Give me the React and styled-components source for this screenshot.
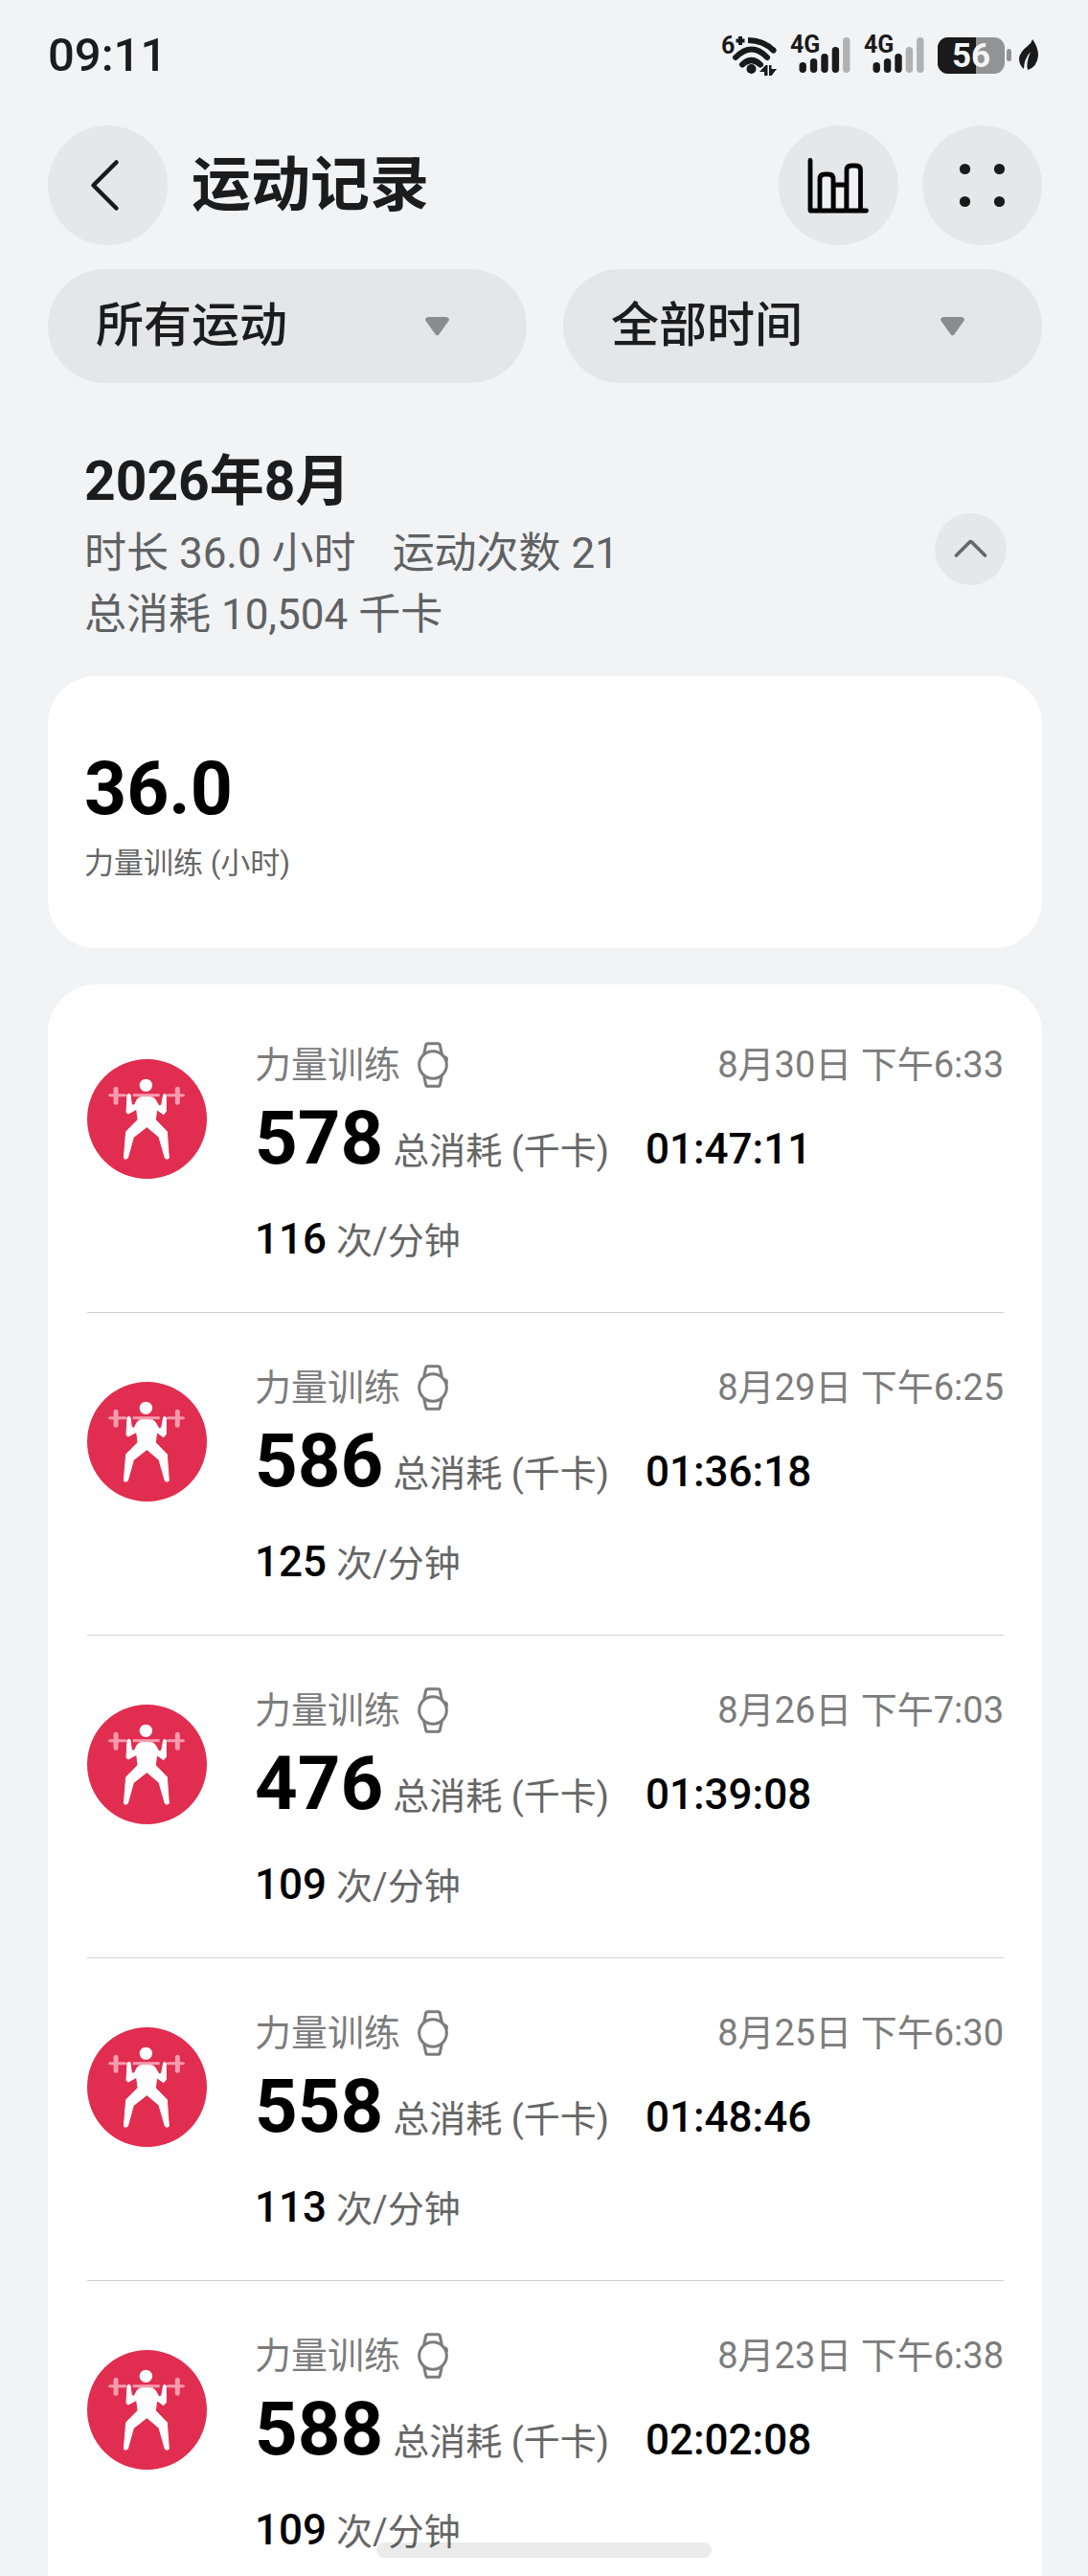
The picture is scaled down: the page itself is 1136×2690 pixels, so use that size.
import React from "react";
import styled, { createGlobalStyle } from "styled-components";

const GlobalStyle = createGlobalStyle`
  * {
    box-sizing: border-box;
  }
  body {
    margin: 0;
    background-color: #f1f3f5;
    color: #1c1c1d;
    font-family: Roboto, "Noto Sans CJK SC", sans-serif;
  }
  h1, h2, p, ul {
    margin: 0;
    padding: 0;
  }
  svg {
    display: block;
    flex-shrink: 0;
  }
`;

const Screen = styled.div`
  height: 100vh;
  overflow: hidden;
  padding: 0 48px 0 50px;
  display: flex;
  flex-direction: column;
`;

const StatusBar = styled.div`
  height: 116px;
  display: flex;
  justify-content: space-between;
`;
const Clock = styled.time`
  font-size: 49px;
  font-weight: 500;
  line-height: 116px;
`;
const StatusIcons = styled.div`
  display: flex;
  align-items: center;
  gap: 14px;
`;
const Power = styled.div`
  display: flex;
  align-items: center;
  gap: 8px;
`;
const SmallText = styled.text`
  font-size: 25px;
  font-weight: 700;
  fill: #1a1a1a;
`;
const BatteryText = styled.text`
  font-size: 35px;
  font-weight: 700;
  fill: #f4f5f6;
  text-anchor: middle;
`;

const Header = styled.header`
  margin-top: 15px;
  display: flex;
  align-items: center;
  gap: 25px;
`;
const Title = styled.h1`
  flex: 1;
  font-size: 62px;
  font-weight: 700;
  line-height: 80px;
`;
const RoundButton = styled.button`
  width: ${(props) => props.$size}px;
  height: ${(props) => props.$size}px;
  flex-shrink: 0;
  padding: 0;
  border: 0;
  border-radius: 50%;
  background-color: #e5e7e9;
`;

const Filters = styled.div`
  margin-top: 25px;
  display: grid;
  grid-template-columns: 1fr 1fr;
  gap: 38px;
`;
const Filter = styled.label`
  height: 119px;
  padding: 0 81px 0 50px;
  border-radius: 60px;
  background-color: #e5e6e8;
  display: flex;
  align-items: center;
`;
const FilterSelect = styled.select`
  flex: 1;
  min-width: 0;
  height: 100%;
  padding: 0 0 2px;
  border: 0;
  appearance: none;
  background: none;
  color: #1c1c1d;
  font-family: inherit;
  font-size: 50px;
  font-weight: 500;
`;

const Month = styled.section`
  margin-top: 60px;
  padding: 0 37px 0 38px;
  display: flex;
  align-items: center;
  justify-content: space-between;
`;
const MonthText = styled.div`
  padding-bottom: 12px;
`;
const MonthTitle = styled.h2`
  font-size: 57px;
  font-weight: 700;
  line-height: 86px;
`;
const MonthLine = styled.p`
  display: flex;
  gap: 38px;
  color: #606163;
  font-size: 44px;
  line-height: 64px;
`;

const Card = styled.section`
  background-color: #ffffff;
  border-radius: 50px;
`;
const TotalCard = styled(Card)`
  margin-top: 20px;
  padding: 68px 38px 60px;
`;
const TotalValue = styled.p`
  color: #000000;
  font-size: 77px;
  font-weight: 700;
  line-height: 100px;
`;
const TotalLabel = styled.p`
  color: #666666;
  font-size: 31px;
  line-height: 56px;
`;

const ListCard = styled(Card).attrs({ as: "ul" })`
  flex: 1 0 auto;
  margin-top: 38px;
  padding: 6px 40px 60px 41px;
  list-style: none;
`;
const Row = styled.li`
  height: 337px;
  padding-top: 52px;
  border-bottom: 1px solid #cfcfcf;
  display: flex;
  gap: 50px;
`;
const Badge = styled.div`
  padding-top: 20px;
`;
const RowBody = styled.div`
  flex: 1;
`;
const RowTop = styled.div`
  height: 52px;
  display: flex;
  align-items: center;
  gap: 18px;
  color: #7c7c7c;
  font-size: 38px;
  line-height: 52px;
`;
const RowDate = styled.time`
  margin-left: auto;
`;
const Stats = styled.div`
  display: flex;
  align-items: baseline;
  line-height: ${(props) => props.$height}px;
`;
const Calories = styled.span`
  margin-right: 10px;
  color: #000000;
  font-size: 78px;
  font-weight: 700;
`;
const Unit = styled.span`
  color: #666666;
  font-size: 38px;
`;
const Figure = styled.span`
  margin: 0 ${(props) => props.$after || 0}px 0 ${(props) => props.$before || 0}px;
  color: #000000;
  font-size: 44px;
  font-weight: 500;
`;

const HomeBar = styled.div`
  position: fixed;
  bottom: 19px;
  left: 50%;
  width: 350px;
  height: 16px;
  margin-left: -175px;
  border-radius: 8px;
  background-color: rgba(0, 0, 0, 0.08);
`;

const workouts = [
  { date: "8月30日 下午6:33", calories: 578, time: "01:47:11", heart: 116 },
  { date: "8月29日 下午6:25", calories: 586, time: "01:36:18", heart: 125 },
  { date: "8月26日 下午7:03", calories: 476, time: "01:39:08", heart: 109 },
  { date: "8月25日 下午6:30", calories: 558, time: "01:48:46", heart: 113 },
  { date: "8月23日 下午6:38", calories: 588, time: "02:02:08", heart: 109 },
];

function WifiIcon() {
  return (
    <svg width="58" height="56" viewBox="-1 -6 58 56">
      <SmallText x="-1" y="20">6</SmallText>
      <path d="M14.500 6.500h9M19 2v9" stroke="#1a1a1a" strokeWidth="4" />
      <g fill="none" stroke="#1a1a1a" strokeWidth="6">
        <path d="M27 6q16 0 27 11" />
        <path d="M53.500 16.500l.1.1M14 24q17 -17 33 0M21 31.500q9.500 -9 19 0" strokeLinecap="round" />
      </g>
      <circle cx="30.500" cy="36" r="5" fill="#1a1a1a" />
      <path d="M39 39l6.500-7h2v11h-3.500v-4zM49 32h2.500v4h5.500l-5.500 7h-2.500z" fill="#1a1a1a" />
    </svg>
  );
}

function SignalIcon({ level }) {
  const tops = [27, 23, 18, 11, 1];
  return (
    <svg width="63" height="56" viewBox="0 -6 63 56">
      <SmallText x="0" y="19">4G</SmallText>
      {tops.map((top, i) => (
        <rect
          key={top}
          x={9.5 + i * 11.4}
          y={top + 2}
          width="7.400"
          height={38 - top}
          rx="3.700"
          fill={i < level ? "#1a1a1a" : "#b0b1b3"}
        />
      ))}
    </svg>
  );
}

function BatteryIcon() {
  return (
    <svg width="77" height="44" viewBox="0 0 77 44">
      <rect x="0" y="3" width="70" height="38" rx="11" fill="#929394" />
      <path d="M40 3H11A11 11 0 0 0 0 14V30A11 11 0 0 0 11 41H40z" fill="#1a1a1a" />
      <rect x="72" y="15" width="5" height="13" rx="2.500" fill="#929394" />
      <BatteryText x="35" y="34">56</BatteryText>
    </svg>
  );
}

function LeafIcon() {
  return (
    <svg width="24" height="44" viewBox="0 0 24 44">
      <path d="M14 5Q20 13 20 22Q19 34 9 37Q7 30 12 18Q5 26 5 36Q0 32 0 25Q1 18 9 12Q13 9 14 5z" fill="#1a1a1a" />
    </svg>
  );
}

function BackIcon() {
  return (
    <svg width="125" height="125" viewBox="0 0 125 125" fill="none">
      <path d="M71.500 38.500L47.500 62.500L71.500 86.500" stroke="#1a1a1a" strokeWidth="4.500" strokeLinecap="round" strokeLinejoin="round" />
    </svg>
  );
}

function ChartIcon() {
  return (
    <svg width="125" height="125" viewBox="0 0 125 125" fill="#f0f1f2" stroke="#000" strokeWidth="4.800">
      <path d="M57 89V62H71V89" />
      <path d="M43 89V56q0-5 5-5h4q5 0 5 5V89" />
      <path d="M71 89V47q0-5 5-5h4.500q5 0 5 5V89" />
      <path d="M33 36.500V89H91.500" fill="none" strokeLinecap="round" strokeLinejoin="round" />
    </svg>
  );
}

function MoreIcon() {
  return (
    <svg width="125" height="125" viewBox="0 0 125 125" fill="#1a1a1a">
      <circle cx="44.500" cy="45.500" r="5.600" />
      <circle cx="80.500" cy="45.500" r="5.600" />
      <circle cx="44.500" cy="79.500" r="5.600" />
      <circle cx="80.500" cy="79.500" r="5.600" />
    </svg>
  );
}

function CollapseIcon() {
  return (
    <svg width="75" height="75" viewBox="0 0 75 75" fill="none">
      <path d="M22.500 44L36 30.500q1.500-1.500 3 0L52.500 44" stroke="#66676a" strokeWidth="3.600" strokeLinecap="round" />
    </svg>
  );
}

function CaretIcon() {
  return (
    <svg width="25" height="20" viewBox="0 0 25 20">
      <path d="M3 0H22Q26 1 24.500 4L14.500 18Q12.500 20.500 10.500 18L.5 4Q-1 1 3 0z" fill="#8b8c8e" />
    </svg>
  );
}

function WatchIcon() {
  return (
    <svg width="32" height="48" viewBox="0 0 96 144" fill="none" stroke="#7c7c7c" strokeWidth="9">
      <circle cx="48" cy="72" r="43" />
      <path d="M20 38L26 10Q27 5 32 5H64Q69 5 70 10L76 38M20 106L26 134Q27 139 32 139H64Q69 139 70 134L76 106M86 46L91 52V60" />
    </svg>
  );
}

function StrengthIcon() {
  return (
    <svg width="125" height="125" viewBox="0 0 375 375">
      <circle cx="187.500" cy="187.500" r="187.500" fill="#e12d50" />
      <g stroke="#f79bae" strokeLinecap="round">
        <path d="M71 113H119M253 113H301" strokeWidth="9" />
        <path d="M90 94V136M283 94V136" strokeWidth="15" />
        <path d="M143 113H227" strokeWidth="9" strokeLinecap="butt" />
      </g>
      <circle cx="184" cy="82" r="20" fill="#fff" />
      <path
        d="M126 111L123 167L129 171L155 157L159 190L122 227L115 310L120 313L127 310L145 245L187 212L225 244L244 310L250 313L256 310L250 227L214 190L218 158L239 173L247 165L247 112L243 109L239 111L233 144L225 147L213 126Q207 119 200 119H170Q162 119 157 126L147 145L139 142L135 111L131 109z"
        fill="#fff"
        stroke="#fff"
        strokeWidth="3"
        strokeLinejoin="round"
      />
    </svg>
  );
}

function WorkoutRow({ workout }) {
  return (
    <Row>
      <Badge>
        <StrengthIcon />
      </Badge>
      <RowBody>
        <RowTop>
          <span>力量训练</span>
          <WatchIcon />
          <RowDate>{workout.date}</RowDate>
        </RowTop>
        <Stats $height={102}>
          <Calories>{workout.calories}</Calories>
          <Unit>总消耗 (千卡)</Unit>
          <Figure $before={38}>{workout.time}</Figure>
        </Stats>
        <Stats $height={82}>
          <Figure $after={10}>{workout.heart}</Figure>
          <Unit>次/分钟</Unit>
        </Stats>
      </RowBody>
    </Row>
  );
}

export default function App() {
  return (
    <>
      <GlobalStyle />
      <Screen>
        <StatusBar>
          <Clock>09:11</Clock>
          <StatusIcons>
            <WifiIcon />
            <SignalIcon level={4} />
            <SignalIcon level={3} />
            <Power>
              <BatteryIcon />
              <LeafIcon />
            </Power>
          </StatusIcons>
        </StatusBar>
        <Header>
          <RoundButton $size={125} aria-label="返回">
            <BackIcon />
          </RoundButton>
          <Title>运动记录</Title>
          <RoundButton $size={125} aria-label="统计">
            <ChartIcon />
          </RoundButton>
          <RoundButton $size={125} aria-label="更多">
            <MoreIcon />
          </RoundButton>
        </Header>
        <Filters>
          <Filter>
            <FilterSelect aria-label="运动类型">
              <option>所有运动</option>
            </FilterSelect>
            <CaretIcon />
          </Filter>
          <Filter>
            <FilterSelect aria-label="时间范围">
              <option>全部时间</option>
            </FilterSelect>
            <CaretIcon />
          </Filter>
        </Filters>
        <Month>
          <MonthText>
            <MonthTitle>2026年8月</MonthTitle>
            <MonthLine>
              <span>时长 36.0 小时</span>
              <span>运动次数 21</span>
            </MonthLine>
            <MonthLine>总消耗 10,504 千卡</MonthLine>
          </MonthText>
          <RoundButton $size={75} aria-label="收起">
            <CollapseIcon />
          </RoundButton>
        </Month>
        <TotalCard>
          <TotalValue>36.0</TotalValue>
          <TotalLabel>力量训练 (小时)</TotalLabel>
        </TotalCard>
        <ListCard>
          {workouts.map((workout) => (
            <WorkoutRow key={workout.date} workout={workout} />
          ))}
        </ListCard>
      </Screen>
      <HomeBar />
    </>
  );
}
